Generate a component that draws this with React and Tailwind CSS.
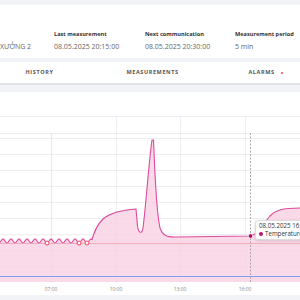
const font = { fontFamily: '"Open Sans", "Noto Sans", sans-serif' };

function wavePath() {
  let d = "";
  for (let x = 0; x <= 92; x++) {
    const y = 241 + 2 * Math.cos((2 * Math.PI * (x - 47)) / 8);
    d += (x === 0 ? "M" : " L") + x + " " + y.toFixed(2);
  }
  return d;
}

const line =
  wavePath() +
  " C 94 232 97 225 103 219 C 110 213 122 210 136 209 L 137.5 226 C 138.5 234 142 234 143 228 C 146 205 149 160 152 140 L 153.5 140 C 155 180 157 215 160 228 C 163 236 167 237 175 237 L 250 236 C 258 235 262 225 270 216 C 276 210 282 208 300 208";

const hLines = [116, 133, 138, 154, 170, 186, 202, 218, 234, 250, 266];
const ticks = [
  { x: 51, label: "07:00" },
  { x: 116, label: "10:00" },
  { x: 180, label: "13:00" },
  { x: 245, label: "16:00" },
];

function InfoCol({ width, label, value }) {
  return (
    <div className="flex flex-col shrink-0" style={{ width }}>
      <div className="h-[8px] text-[5.6px] font-bold leading-[8px] text-[#333]">{label}</div>
      <div className="mt-[4px] whitespace-nowrap text-[7px] leading-[9px] text-[#666]">{value}</div>
    </div>
  );
}

export default function App() {
  return (
    <div className="w-[300px] h-[300px] overflow-hidden bg-[#f2f3f7] pt-[5px]" style={font}>
      {/* Device info */}
      <div className="h-[53px] bg-white pt-[25px] flex">
        <InfoCol width={54} label="" value="XƯỞNG 2" />
        <InfoCol width={91} label="Last measurement" value="08.05.2025 20:15:00" />
        <InfoCol width={90} label="Next communication" value="08.05.2025 20:30:00" />
        <InfoCol width={70} label="Measurement period" value="5 min" />
      </div>

      {/* Tabs */}
      <div className="mt-[4px] h-[23px] bg-white border-b-2 border-[#e2e3e8] flex ml-[-17px]">
        {["HISTORY", "MEASUREMENTS", "ALARMS"].map((t) => (
          <div key={t} className="w-[113px] shrink-0 flex items-center justify-center text-[5.5px] font-bold tracking-[0.6px] text-[#555]">
            {t}
            {t === "ALARMS" && <span className="ml-[6px] w-[2px] h-[2px] rounded-full bg-[#f0405a]" />}
          </div>
        ))}
      </div>

      {/* Chart */}
      <div className="relative mt-[7px] h-[203px] bg-white">
        <svg width="300" height="203" viewBox="0 92 300 203" className="block">
          {hLines.map((y) => (
            <line key={y} x1="0" x2="300" y1={y + 0.5} y2={y + 0.5} stroke="#eceef3" strokeWidth="1" />
          ))}
          <line x1="51.5" x2="51.5" y1="133" y2="283" stroke="#f6e3ee" strokeWidth="1.2" />
          {[116, 180, 245].map((x) => (
            <line key={x} x1={x + 0.5} x2={x + 0.5} y1="116" y2="283" stroke="#eceef3" strokeWidth="1" />
          ))}
          <path d={line + " L 300 282 L 0 282 Z"} fill="#f9cfe3" fillOpacity="0.8" />
          <path d={line} fill="none" stroke="#dc4a9b" strokeWidth="1.1" />
          <line x1="0" x2="300" y1="243.5" y2="243.5" stroke="#f3a0ad" strokeWidth="0.8" />
          <line x1="0" x2="300" y1="276.5" y2="276.5" stroke="#7e9ff2" strokeWidth="1" />
          <line x1="250.5" x2="250.5" y1="133" y2="283" stroke="#9a9a9a" strokeWidth="0.8" strokeDasharray="2 1.5" />
          {[47, 79, 87].map((x) => (
            <circle key={x} cx={x} cy="243" r="2" fill="#fff" stroke="#f0455c" strokeWidth="1" />
          ))}
          <circle cx="250.5" cy="236" r="2.2" fill="#a3125f" stroke="#fff" strokeWidth="0.6" />
          {ticks.map((t) => (
            <text key={t.x} x={t.x} y="291" textAnchor="middle" fontSize="5" fill="#888" style={font}>
              {t.label}
            </text>
          ))}
        </svg>

        {/* Tooltip */}
        <div className="absolute left-[255px] top-[128px] w-[60px] h-[20px] rounded-[3px] border border-[#ddd] bg-white shadow-[0_1px_3px_rgba(0,0,0,0.15)] pl-[3px] pt-[1px]">
          <div className="whitespace-nowrap text-[6.2px] leading-[8px] text-[#333]">08.05.2025 16:25:00</div>
          <div className="flex items-center whitespace-nowrap text-[6.2px] leading-[8px] text-[#333]">
            <span className="mr-[2px] w-[4px] h-[4px] rounded-full bg-[#b0176a]" />
            Temperature
          </div>
        </div>
      </div>
    </div>
  );
}
